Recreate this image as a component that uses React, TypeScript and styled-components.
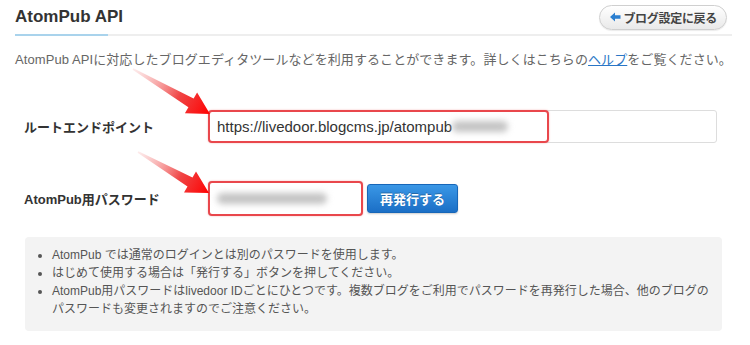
import React from 'react';
import styled, { createGlobalStyle } from 'styled-components';

const GlobalStyle = createGlobalStyle`
    body {
        margin: 0;
        background: #fff;
        font-family: "Liberation Sans", "Noto Sans CJK JP", sans-serif;
        color: #333;
    }
`;

const Page = styled.div`
    position: relative;
    width: 750px;
    height: 345px;
    padding: 0 18px 0 15px;
    box-sizing: border-box;
    overflow: hidden;
`;

const Header = styled.div`
    position: relative;
    display: flex;
    justify-content: space-between;
    align-items: center;
    height: 34px;
    border-bottom: 2px solid #eeeeee;
    &::after {
        content: '';
        position: absolute;
        left: 0;
        bottom: -2px;
        width: 93px;
        height: 2px;
        background: #a9d3ec;
    }
`;

const Title = styled.h1`
    margin: 0;
    font-size: 17px;
    font-weight: 700;
    color: #333;
`;

const BackButton = styled.button`
    display: flex;
    align-items: center;
    gap: 2px;
    height: 25px;
    margin-right: 5px;
    padding: 0 9px 0 10px;
    border: 1px solid #cfcfcf;
    border-radius: 13px;
    background: linear-gradient(#ffffff, #e9e9e9);
    font-family: "Liberation Sans", "Noto Sans CJK JP", sans-serif;
    font-size: 12px;
    font-weight: 700;
    letter-spacing: -0.3px;
    color: #444;
    box-shadow: 0 1px 1px rgba(0, 0, 0, 0.08);
`;

const Description = styled.p`
    margin: 14px 0 0;
    font-size: 13px;
    line-height: 20px;
    letter-spacing: 0.08px;
    color: #666;
    white-space: nowrap;
`;

const HelpLink = styled.a`
    color: #2a76c6;
    text-decoration: underline;
`;

const Form = styled.div`
    display: grid;
    grid-template-columns: 184px 1fr;
    row-gap: 38px;
    align-items: center;
    margin: 40px 0 0 9px;
`;

const Label = styled.div`
    font-size: 13px;
    font-weight: 700;
    color: #333;
`;

const FieldRow = styled.div`
    display: flex;
    align-items: center;
    gap: 4px;
`;

const Field = styled.div<{ $width: number; $height: number }>`
    position: relative;
    display: flex;
    align-items: center;
    width: ${p => p.$width}px;
    height: ${p => p.$height}px;
    padding-left: 8px;
    box-sizing: border-box;
    border: 1px solid #dddddd;
    border-radius: 3px;
    background: #fff;
    font-size: 15px;
    color: #333;
`;

const Blurred = styled.span<{ $width: number }>`
    display: inline-block;
    width: ${p => p.$width}px;
    height: 11px;
    border-radius: 6px;
    background: #c4c4c4;
    filter: blur(3px);
`;

const Highlight = styled.div<{ $width: number }>`
    position: absolute;
    left: -1px;
    top: -1px;
    bottom: -1px;
    width: ${p => p.$width}px;
    border: 2px solid #e9474c;
    border-radius: 4px;
    box-sizing: border-box;
    box-shadow: 0 0 2px rgba(233, 71, 76, 0.4);
`;

const PrimaryButton = styled.button`
    height: 29px;
    padding: 0 12px;
    border: 1px solid #1766b8;
    border-radius: 3px;
    background: linear-gradient(#3a97e6, #1b6fc6);
    color: #fff;
    font-family: "Liberation Sans", "Noto Sans CJK JP", sans-serif;
    font-size: 13px;
    font-weight: 700;
    text-shadow: 0 -1px 0 rgba(0, 0, 0, 0.25);
    box-shadow: 0 1px 2px rgba(0, 0, 0, 0.2);
`;

const InfoBox = styled.div`
    margin: 21px 10px 0 10px;
    padding: 9px 12px 13px 0;
    border-radius: 4px;
    background: #f3f3f3;
`;

const InfoList = styled.ul`
    margin: 0;
    padding-left: 27px;
    font-size: 12px;
    line-height: 18px;
    letter-spacing: 0;
    color: #555;
`;

const Arrows = styled.svg`
    position: absolute;
    left: 0;
    top: 0;
    pointer-events: none;
`;

function BackArrow() {
    return (
        <svg width="11" height="10" viewBox="0 0 11 10">
            <path d="M0 5 L5 0.5 L5 3.2 L10.5 3.2 L10.5 6.8 L5 6.8 L5 9.5 Z" fill="#2b7fd0" />
        </svg>
    );
}

export default function App() {
    return (
        <Page>
            <GlobalStyle />
            <Header>
                <Title>AtomPub API</Title>
                <BackButton><BackArrow />ブログ設定に戻る</BackButton>
            </Header>
            <Description>
                AtomPub APIに対応したブログエディタツールなどを利用することができます。詳しくはこちらの<HelpLink href="#">ヘルプ</HelpLink>をご覧ください。
            </Description>
            <Form>
                <Label>ルートエンドポイント</Label>
                <Field $width={509} $height={33}>
                    https://livedoor.blogcms.jp/atompub<Blurred $width={56} />
                    <Highlight $width={341} />
                </Field>
                <Label>AtomPub用パスワード</Label>
                <FieldRow>
                    <Field $width={155} $height={35}>
                        <Blurred $width={110} />
                        <Highlight $width={155} />
                    </Field>
                    <PrimaryButton>再発行する</PrimaryButton>
                </FieldRow>
            </Form>
            <InfoBox>
                <InfoList>
                    <li>AtomPub では通常のログインとは別のパスワードを使用します。</li>
                    <li>はじめて使用する場合は「発行する」ボタンを押してください。</li>
                    <li>AtomPub用パスワードはlivedoor IDごとにひとつです。複数ブログをご利用でパスワードを再発行した場合、他のブログのパスワードも変更されますのでご注意ください。</li>
                </InfoList>
            </InfoBox>
            <Arrows width="750" height="345" viewBox="0 0 750 345">
                <defs>
                    <linearGradient id="arrow1" gradientUnits="userSpaceOnUse" x1="133" y1="69" x2="210" y2="114">
                        <stop offset="0" stopColor="#f5a0a0" stopOpacity="0.2" />
                        <stop offset="0.6" stopColor="#ee3030" stopOpacity="0.9" />
                        <stop offset="1" stopColor="#ff0000" />
                    </linearGradient>
                    <linearGradient id="arrow2" gradientUnits="userSpaceOnUse" x1="138" y1="152" x2="209" y2="193">
                        <stop offset="0" stopColor="#f5a0a0" stopOpacity="0.2" />
                        <stop offset="0.6" stopColor="#ee3030" stopOpacity="0.9" />
                        <stop offset="1" stopColor="#ff0000" />
                    </linearGradient>
                </defs>
                <polygon
                    points="132.6,69.7 188.4,107.3 184.9,113.2 210,114 197.1,92.5 193.6,98.6 133.4,68.3"
                    fill="url(#arrow1)"
                />
                <polygon
                    points="137.6,152.7 187.5,186.4 184,192.4 209,193 196,171.6 192.5,177.6 138.4,151.3"
                    fill="url(#arrow2)"
                />
            </Arrows>
        </Page>
    );
}
